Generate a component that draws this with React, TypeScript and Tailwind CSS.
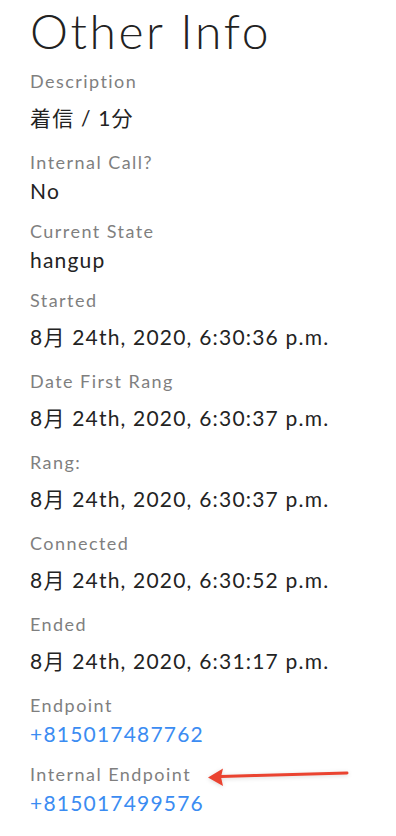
const fontStack = { fontFamily: '"Lato", "Noto Sans CJK JP", sans-serif' }

type Field = {
  label: string
  value: string
  kind?: "spaced" | "link"
}

const fields: Field[] = [
  { label: "Description", value: "着信 / 1分", kind: "spaced" },
  { label: "Internal Call?", value: "No" },
  { label: "Current State", value: "hangup" },
  { label: "Started", value: "8月 24th, 2020, 6:30:36 p.m.", kind: "spaced" },
  { label: "Date First Rang", value: "8月 24th, 2020, 6:30:37 p.m.", kind: "spaced" },
  { label: "Rang:", value: "8月 24th, 2020, 6:30:37 p.m.", kind: "spaced" },
  { label: "Connected", value: "8月 24th, 2020, 6:30:52 p.m.", kind: "spaced" },
  { label: "Ended", value: "8月 24th, 2020, 6:31:17 p.m.", kind: "spaced" },
  { label: "Endpoint", value: "+815017487762", kind: "link" },
  { label: "Internal Endpoint", value: "+815017499576", kind: "link" },
]

function InfoField({ field, annotated }: { field: Field; annotated?: boolean }) {
  return (
    <div className="relative flex flex-col">
      <div className="text-[18px] leading-[24px] tracking-[1.45px] text-[#7f7f7f]">
        {field.label}
      </div>

      {field.kind === "link" ? (
        <a className="mt-[3px] text-[21px] leading-[28px] tracking-[1.2px] text-[#3b8cf2]">
          {field.value}
        </a>
      ) : (
        <div
          className={
            field.kind === "spaced"
              ? "mt-[11px] mb-[4px] text-[21px] leading-[28px] tracking-[1.2px] text-[#232323]"
              : "mt-[3px] text-[21px] leading-[28px] tracking-[1.2px] text-[#232323]"
          }
        >
          {field.value}
        </div>
      )}

      {/* red annotation arrow pointing at the label */}
      {annotated && (
        <svg
          className="absolute left-[176px] top-[4px] drop-shadow-sm"
          width="146"
          height="22"
          viewBox="0 0 146 22"
        >
          <path d="M15 10.5 L141 7" stroke="#ea4330" strokeWidth="3" strokeLinecap="round" />
          <path d="M2 11.5 L17 2.5 L15 11 L17 20 Z" fill="#ea4330" strokeLinejoin="round" />
        </svg>
      )}
    </div>
  )
}

export default function App() {
  return (
    <div className="min-h-[836px] bg-white px-[30px] pt-[2px]" style={fontStack}>

      <h1 className="text-[48px] font-light leading-[58px] tracking-[2.6px] text-[#222]">
        Other Info
      </h1>

      <div className="mt-[9px] flex flex-col gap-[14px]">
        {fields.map((field, index) => (
          <InfoField
            key={field.label}
            field={field}
            annotated={index === fields.length - 1}
          />
        ))}
      </div>

    </div>
  )
}
